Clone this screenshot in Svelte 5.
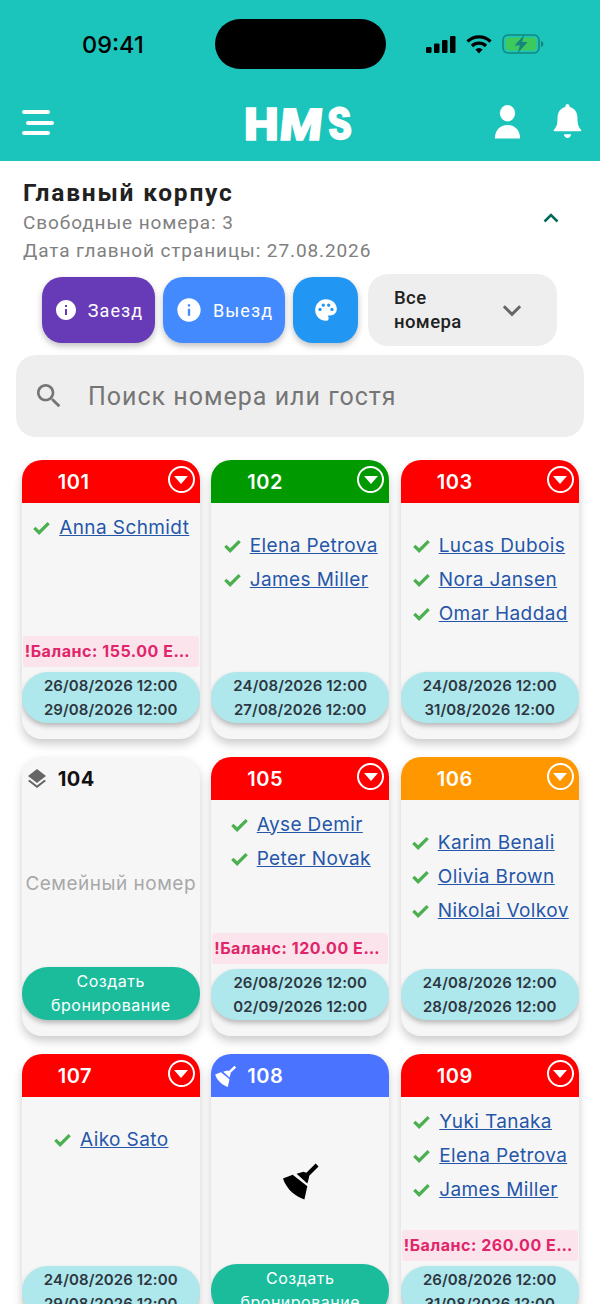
<script lang="ts">
  const icons = {
    info: 'M12 2C6.48 2 2 6.48 2 12s4.48 10 10 10 10-4.48 10-10S17.52 2 12 2zm1 15h-2v-6h2v6zm0-8h-2V7h2v2z',
    palette: 'M12 2C6.49 2 2 6.49 2 12s4.49 10 10 10c1.38 0 2.5-1.12 2.5-2.5 0-.61-.23-1.2-.64-1.67-.08-.1-.13-.21-.13-.33 0-.28.22-.5.5-.5H16c3.31 0 6-2.69 6-6 0-4.96-4.49-9-10-9zm5.5 11c-.83 0-1.5-.67-1.5-1.5s.67-1.5 1.5-1.5 1.5.67 1.5 1.5-.67 1.5-1.5 1.5zm-3-4c-.83 0-1.5-.67-1.5-1.5S13.67 6 14.5 6s1.5.67 1.5 1.5S15.33 9 14.5 9zM5 11.5c0-.83.67-1.5 1.5-1.5s1.5.67 1.5 1.5S7.33 13 6.5 13 5 12.33 5 11.5zm6-4c0 .83-.67 1.5-1.5 1.5S8 8.33 8 7.5 8.67 6 9.5 6s1.5.67 1.5 1.5z',
    search: 'M15.5 14h-.79l-.28-.27C15.41 12.59 16 11.11 16 9.5 16 5.91 13.09 3 9.5 3S3 5.91 3 9.5 5.91 16 9.5 16c1.61 0 3.09-.59 4.23-1.57l.27.28v.79l5 4.99L20.49 19l-4.99-5zm-6 0C7.01 14 5 11.99 5 9.5S7.01 5 9.5 5 14 7.01 14 9.5 11.99 14 9.5 14z',
    check: 'M9 15.6L4.400 11 1.500 13.900 9 21.400 22.500 7.900 19.600 5z',
    layers: 'M11.99 18.54l-7.37-5.73L3 14.07l9 7 9-7-1.63-1.27-7.38 5.74zM12 16l7.36-5.73L21 9l-9-7-9 7 1.63 1.27L12 16z',
    broom: 'M44.500 12.500L47.500 15.500 38 25 37.500 28 36 33 25 23 32 21 35 22zM11 28L21 24 36 36 33 49.500C25 47 15 40 11 28z'
  };

  const rooms = [
    { num: 101, color: '#ff0000', guests: ['Anna Schmidt'], balance: '155.00', dates: ['26/08/2026 12:00', '29/08/2026 12:00'] },
    { num: 102, color: '#009a00', guests: ['Elena Petrova', 'James Miller'], dates: ['24/08/2026 12:00', '27/08/2026 12:00'] },
    { num: 103, color: '#ff0000', guests: ['Lucas Dubois', 'Nora Jansen', 'Omar Haddad'], dates: ['24/08/2026 12:00', '31/08/2026 12:00'] },
    { num: 104, free: true, note: 'Семейный номер' },
    { num: 105, color: '#ff0000', guests: ['Ayse Demir', 'Peter Novak'], balance: '120.00', dates: ['26/08/2026 12:00', '02/09/2026 12:00'] },
    { num: 106, color: '#ff9800', guests: ['Karim Benali', 'Olivia Brown', 'Nikolai Volkov'], dates: ['24/08/2026 12:00', '28/08/2026 12:00'] },
    { num: 107, color: '#ff0000', guests: ['Aiko Sato'], dates: ['24/08/2026 12:00', '29/08/2026 12:00'] },
    { num: 108, color: '#4a74ff', cleaning: true },
    { num: 109, color: '#ff0000', guests: ['Yuki Tanaka', 'Elena Petrova', 'James Miller'], balance: '260.00', dates: ['26/08/2026 12:00', '31/08/2026 12:00'] }
  ];
</script>

<div class="page">
  <header class="top">
    <div class="status">
      <span class="time">09:41</span>
      <div class="island"></div>
      <div class="sys">
        <svg width="30" height="17" viewBox="0 0 30 17"><rect x="0" y="11" width="5.5" height="6" rx="1.2"/><rect x="8" y="7.5" width="5.5" height="9.5" rx="1.2"/><rect x="16" y="4" width="5.5" height="13" rx="1.2"/><rect x="24" y="0" width="5.5" height="17" rx="1.2"/></svg>
        <svg width="26" height="20" viewBox="0 0 26 20" fill="none" stroke="#000" stroke-width="3.2"><path d="M1.5 7.5a16.5 16.5 0 0 1 23 0"/><path d="M6 12a10 10 0 0 1 14 0"/><path d="M13 19.5l-3.6-4a5 5 0 0 1 7.2 0z" fill="#000" stroke="none"/></svg>
        <svg width="42" height="20" viewBox="0 0 42 20"><rect x="1" y="1" width="36" height="18" rx="5" fill="none" stroke="#16857f" stroke-width="1.6"/><rect x="3.5" y="3.5" width="31" height="13" rx="3" fill="#3ec95c"/><path d="M39 7c1.6.4 2.4 1.600 2.400 3s-.8 2.600-2.400 3z" fill="#16857f"/><path d="M22.500 0.500L12.500 11.500h5.500l-2.500 8 10-11.500h-5.500z" fill="#16857f"/></svg>
      </div>
    </div>
    <div class="bar">
      <button class="menu" aria-label="Меню"><i></i><i class="mid"></i><i></i></button>
      <div class="logo"><span class="h">H</span><span class="m">M</span><span class="s">S</span></div>
      <div class="actions">
        <svg width="27" height="35" viewBox="0 0 30 36" preserveAspectRatio="none" fill="#fff"><circle cx="15" cy="9.500" r="8.500"/><path d="M1 35.500c0-9 6-14 14-14s14 5 14 14z"/></svg>
        <svg width="29" height="35" viewBox="0 0 32 36" preserveAspectRatio="none" fill="#fff"><path d="M16 0c1.300 0 2.300 1 2.300 2.300v.7c5.600 1.100 8.700 5.500 8.700 11.300 0 6 .9 8.800 4 12.200.6.700.2 1.500-.7 1.500H1.700c-.9 0-1.300-.8-.7-1.500 3.100-3.400 4-6.200 4-12.200C5 8.500 8.100 4.100 13.700 3v-.7C13.700 1 14.700 0 16 0z"/><path d="M12 31h8c-.6 2.500-2 4-4 4s-3.400-1.500-4-4z"/></svg>
      </div>
    </div>
  </header>

  <section class="summary">
    <div>
      <h1>Главный корпус</h1>
      <p>Свободные номера: 3</p>
      <p>Дата главной страницы: 27.08.2026</p>
    </div>
    <svg class="collapse" width="24" height="24" viewBox="0 0 24 24" fill="none" stroke="#00695c" stroke-width="2.500"><path d="M5.500 15.500L12 9l6.500 6.500"/></svg>
  </section>

  <div class="filters">
    <button class="pill purple"><svg width="24" height="24" viewBox="0 0 24 24"><path d={icons.info}/></svg>Заезд</button>
    <button class="pill blue"><svg width="28" height="28" viewBox="0 0 24 24"><path d={icons.info}/></svg>Выезд</button>
    <button class="pill sky" aria-label="Цвета"><svg width="26" height="26" viewBox="0 0 24 24"><path d={icons.palette}/></svg></button>
    <div class="select">
      <span>Все номера</span>
      <svg width="30" height="30" viewBox="0 0 24 24" fill="none" stroke="#666" stroke-width="2.400"><path d="M5.500 9l6.500 6.500L18.500 9"/></svg>
    </div>
  </div>

  <div class="search">
    <svg width="32" height="32" viewBox="0 0 24 24" fill="#757575"><path d={icons.search}/></svg>
    <span>Поиск номера или гостя</span>
  </div>

  <div class="grid">
    {#each rooms as room}
      <article class="card">
        <div class="head" class:free={room.free} style={room.color ? `background:${room.color}` : ''}>
          <span class="slot">
            {#if room.free}
              <svg width="24" height="24" viewBox="0 0 24 24" fill="#666"><path d={icons.layers}/></svg>
            {:else if room.cleaning}
              <svg width="23" height="24" viewBox="9 10 40 41" fill="#fff"><path d={icons.broom}/></svg>
            {/if}
          </span>
          <span class="num">{room.num}</span>
          {#if room.guests}
            <span class="drop"><i></i></span>
          {/if}
        </div>
        <div class="body">
          {#if room.guests}
            <ul class:raised={room.balance}>
              {#each room.guests as g}
                <li>
                  <svg width="19" height="19" viewBox="0 0 24 24" fill="#4caf50"><path d={icons.check}/></svg>
                  <a href="#guest">{g}</a>
                </li>
              {/each}
            </ul>
          {:else if room.free}
            <p class="note">{room.note}</p>
          {:else if room.cleaning}
            <svg class="broom" width="39" height="40" viewBox="9 10 40 41" fill="#000"><path d={icons.broom}/></svg>
          {/if}
        </div>
        {#if room.balance}
          <div class="balance">!Баланс: {room.balance} EUR</div>
        {/if}
        {#if room.dates}
          <div class="dates">{room.dates[0]}<br />{room.dates[1]}</div>
        {:else}
          <button class="create">Создать<br />бронирование</button>
        {/if}
      </article>
    {/each}
  </div>
</div>

<style>
  :global(body) {
    margin: 0;
    background: #fff;
  }

  .page {
    width: 600px;
    height: 1304px;
    overflow: hidden;
    font-family: Roboto, sans-serif;
  }

  .top {
    height: 161px;
    background: #1bc5bb;
  }

  .status {
    height: 88px;
    display: flex;
    align-items: center;
  }

  .time {
    width: 66px;
    margin-left: 82px;
    font: 500 23.500px Inter, sans-serif;
    color: #000;
  }

  .island {
    width: 171px;
    height: 50px;
    margin-left: 67px;
    border-radius: 25px;
    background: #000;
  }

  .sys {
    margin-left: 40px;
    display: flex;
    align-items: center;
    gap: 10px;
  }

  .bar {
    height: 73px;
    display: flex;
    align-items: flex-start;
    padding: 0 18px 0 22px;
  }

  .menu {
    width: 32px;
    height: 25px;
    margin-top: 22px;
    padding: 0;
    border: 0;
    background: none;
    display: flex;
    flex-direction: column;
    justify-content: space-between;
  }

  .menu i {
    display: block;
    width: 28px;
    height: 4px;
    border-radius: 2px;
    background: #fff;
  }

  .menu i.mid {
    margin-left: 4px;
  }

  .logo {
    margin-left: 190px;
    margin-top: 13px;
    color: #fff;
    font: 900 44px/48px Roboto, sans-serif;
    -webkit-text-stroke: 1.500px #fff;
    display: flex;
  }

  .logo span {
    display: inline-block;
    transform-origin: left center;
  }

  .logo .h {
    width: 36px;
    transform: scaleX(1.12);
  }

  .logo .m {
    width: 48px;
    transform: skewX(-6deg) scaleX(1.1);
  }

  .logo .s {
    width: 28px;
    transform: rotate(-5deg) scaleX(.85);
  }

  .actions {
    margin-left: auto;
    display: flex;
    align-items: flex-start;
    gap: 32px;
    margin-top: 16px;
  }

  .summary {
    display: flex;
    justify-content: space-between;
    align-items: center;
    padding: 18px 37px 0 23px;
  }

  h1 {
    margin: 0 0 2px;
    font-size: 24.500px;
    line-height: 28px;
    font-weight: 700;
    letter-spacing: 1.800px;
    color: #212121;
  }

  .summary p {
    margin: 0;
    font-size: 19px;
    line-height: 28px;
    letter-spacing: .9px;
    color: #808080;
  }

  .collapse {
    margin-top: -8px;
  }

  .filters {
    display: flex;
    align-items: center;
    gap: 8px;
    margin: 9px 0 0 42px;
  }

  .pill {
    height: 66px;
    border: 0;
    border-radius: 20px;
    display: flex;
    align-items: center;
    justify-content: center;
    gap: 10px;
    color: #fff;
    font: 400 18px Roboto, sans-serif;
    letter-spacing: 1.100px;
    box-shadow: 0 3px 6px rgba(0, 0, 0, .25);
    padding: 0;
  }

  .pill svg {
    fill: #fff;
  }

  .purple {
    width: 113px;
    background: #673ab7;
  }

  .blue {
    width: 122px;
    background: #448aff;
  }

  .sky {
    width: 65px;
    background: #2196f3;
  }

  .select {
    width: 189px;
    height: 72px;
    margin-left: 2px;
    border-radius: 20px;
    background: #eeeeee;
    display: flex;
    align-items: center;
    justify-content: space-between;
    padding: 0 30px 0 26px;
    box-sizing: border-box;
    font-size: 18.500px;
    font-weight: 500;
    line-height: 24px;
    letter-spacing: .4px;
    color: #212121;
  }

  .select span {
    width: 80px;
  }

  .search {
    margin: 9px 16px 0;
    height: 82px;
    border-radius: 20px;
    background: #eeeeee;
    display: flex;
    align-items: center;
    padding-left: 17px;
    gap: 23px;
    font-size: 25px;
    letter-spacing: 1px;
    color: #757575;
  }

  .grid {
    display: grid;
    grid-template-columns: repeat(3, 178px);
    column-gap: 11.500px;
    row-gap: 18px;
    padding: 23px 0 0 21.750px;
  }

  .card {
    height: 279px;
    border-radius: 20px;
    background: #f6f6f7;
    box-shadow: 0 5px 10px rgba(0, 0, 0, .2);
    display: flex;
    flex-direction: column;
    overflow: hidden;
  }

  .head {
    height: 43px;
    flex: none;
    display: flex;
    align-items: center;
    padding-left: 3px;
    position: relative;
    color: #fff;
  }

  .head.free {
    color: #111;
  }

  .slot {
    width: 24px;
    height: 24px;
    margin-right: 9px;
    display: flex;
  }

  .num {
    font: 600 20px Inter, sans-serif;
    letter-spacing: .5px;
  }

  .free .num {
    font-weight: 700;
  }

  .drop {
    position: absolute;
    right: 5px;
    top: 6px;
    width: 23px;
    height: 23px;
    border: 2.500px solid #fff;
    border-radius: 50%;
    display: flex;
    align-items: center;
    justify-content: center;
  }

  .drop i {
    width: 0;
    height: 0;
    border: 7px solid transparent;
    border-top: 8px solid #fff;
    border-bottom: 0;
  }

  .body {
    flex: 1;
    min-height: 0;
    display: flex;
    justify-content: center;
    align-items: center;
  }

  ul {
    list-style: none;
    margin: 0;
    padding: 25px 0 0;
    align-self: flex-start;
  }

  ul.raised {
    padding-top: 7px;
  }

  li {
    height: 34px;
    display: flex;
    align-items: center;
    gap: 8px;
    white-space: nowrap;
  }

  li svg {
    flex: none;
  }

  li a {
    font: 400 19px Inter, sans-serif;
    letter-spacing: .4px;
    color: #2556a8;
  }

  .note {
    margin: 0;
    font: 400 19px Inter, sans-serif;
    letter-spacing: .5px;
    color: #a8a8a8;
    white-space: nowrap;
  }

  .balance {
    flex: none;
    height: 31px;
    margin: 0 1px 5px;
    padding: 0 2px;
    background: #fce4ec;
    color: #e0256a;
    font: 700 16px/31px Inter, sans-serif;
    letter-spacing: .55px;
    white-space: nowrap;
    overflow: hidden;
    text-overflow: ellipsis;
    border-radius: 3px;
  }

  .dates,
  .create {
    flex: none;
    height: 51px;
    margin-bottom: 16px;
    border-radius: 26px;
    text-align: center;
    box-shadow: 0 3px 5px rgba(0, 0, 0, .25);
    box-sizing: border-box;
  }

  .dates {
    padding-top: 2px;
    background: #aee8ec;
    color: #2d3640;
    font: 600 15px/23.500px Inter, sans-serif;
    letter-spacing: .1px;
  }

  .create {
    width: 100%;
    height: 53px;
    border: 0;
    padding: 0;
    background: #1abc9c;
    color: #fff;
    font: 400 16px/23.500px Inter, sans-serif;
    letter-spacing: .5px;
  }
</style>
